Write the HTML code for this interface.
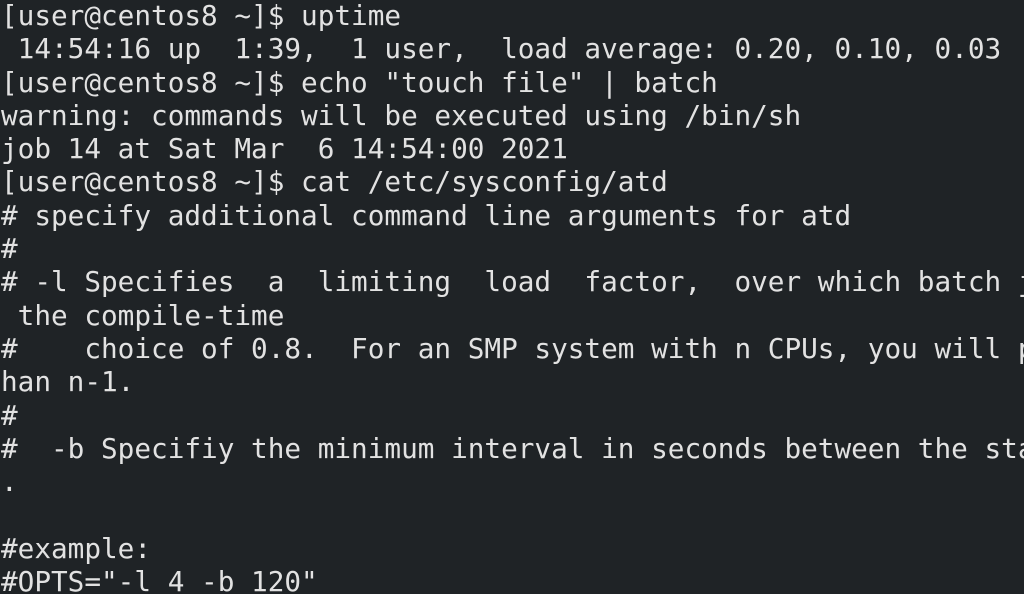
<!DOCTYPE html>
<html><head><meta charset="utf-8"><style>
html,body{margin:0;padding:0;background:#1f2326;width:1024px;height:594px;overflow:hidden}
pre{margin:-1px 0 0 0;padding:0 0 0 1px;font-family:"DejaVu Sans Mono","Liberation Mono",monospace;font-size:27.7px;line-height:33.3px;color:#e2e2e2;white-space:pre}
</style></head><body><pre>[user@centos8 ~]$ uptime
 14:54:16 up  1:39,  1 user,  load average: 0.20, 0.10, 0.03
[user@centos8 ~]$ echo "touch file" | batch
warning: commands will be executed using /bin/sh
job 14 at Sat Mar  6 14:54:00 2021
[user@centos8 ~]$ cat /etc/sysconfig/atd
# specify additional command line arguments for atd
#
# -l Specifies  a  limiting  load  factor,  over which batch j
 the compile-time
#    choice of 0.8.  For an SMP system with n CPUs, you will p
han n-1.
#
#  -b Specifiy the minimum interval in seconds between the sta
.

#example:
#OPTS="-l 4 -b 120"</pre></body></html>
